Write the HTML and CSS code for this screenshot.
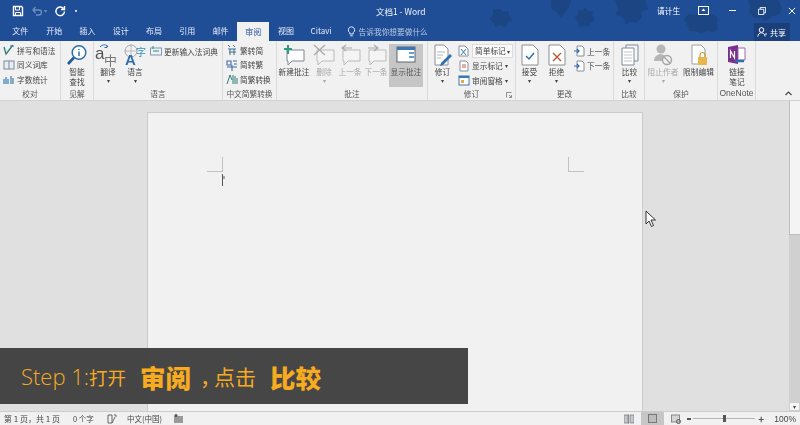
FILE: index.html
```html
<!DOCTYPE html>
<html lang="zh-CN">
  <head>
    <meta charset="UTF-8" />
    <title>文档1 - Word</title>
    <link rel="stylesheet" href="styles.css">
  </head>
  <body>
    <div class="app">
      <header class="titlebar">
        <svg class="stars" width="800" height="41" viewBox="0 0 800 41">
          <g fill="#1c4584" stroke="#1c4584" stroke-width="2" stroke-linejoin="round">
            <path d="M500 10l3 3 5-1 0 4 3 4-4 2-2 4-5-2-4 2-1-4-4-3 3-4 0-5 5 0z"/>
            <path d="M552 0h18l-2 7-3 4-4 5-4-5-5-3z"/>
            <path d="M585 9l3 3 4 0-1 4 3 4-4 2-2 4-3-2-5 2-1-5-3-3 3-3 0-4 4 0z"/>
            <path d="M616 0h28l3 8-7 3 1 6-5 5-5-1-5 2-2-6-7-3 2-6z"/>
            <path d="M689 15l5 1 6-2 5 3 7-2 5 3-1 5 1 6-4 2-6-1-6 2-6-2-5 0-2-6-3-5z"/>
            <path d="M749 0h28l4 8-3 6-6 1-6 5-5-3-6 0-5-6 1-5z"/>
          </g>
        </svg>
        <div class="toprow">
          <div class="qat">
            <svg width="12" height="12" viewBox="0 0 12 12"><path d="M1.500 1.500h8l1 1v8h-9z" fill="none" stroke="#fff" stroke-width="1.400"/><path d="M3.500 2v3h4V2M3.500 10V7.500h5V10" fill="none" stroke="#fff"/></svg>
            <svg width="12" height="12" viewBox="0 0 12 12"><path d="M2 5h6a2.500 2.500 0 0 1 0 5H5M4.500 2L2 5l2.500 3" fill="none" stroke="#6f8fc0" stroke-width="1.300"/></svg>
            <span class="qat-drop">▾</span>
            <svg width="12" height="12" viewBox="0 0 12 12"><path d="M9.500 3.500a4.300 4.300 0 1 0 1 3M10.500 1v3.500H7" fill="none" stroke="#fff" stroke-width="1.400"/></svg>
            <span class="qat-more">▪</span>
          </div>
          <div class="doc-title">文档1 - Word</div>
          <div class="window-controls">
            <span class="account">请计生</span>
            <svg width="11" height="9" viewBox="0 0 11 9"><rect x=".5" y=".5" width="10" height="8" fill="none" stroke="#fff"/><path d="M3.500 5L5.500 2.500 7.500 5z" fill="#fff"/></svg>
            <span class="minimize"></span>
            <svg width="8" height="8" viewBox="0 0 9 9"><path d="M.5 2.500h6v6h-6zM2.500 2.500v-2h6v6h-2" fill="none" stroke="#fff"/></svg>
            <svg width="8" height="8" viewBox="0 0 9 9"><path d="M1 1l7 7M8 1l-7 7" stroke="#fff" stroke-width="1.100"/></svg>
          </div>
        </div>
        <nav class="tabs">
          <span class="tab tab-file">文件</span>
          <span class="tab">开始</span>
          <span class="tab">插入</span>
          <span class="tab">设计</span>
          <span class="tab">布局</span>
          <span class="tab">引用</span>
          <span class="tab">邮件</span>
          <span class="tab active">审阅</span>
          <span class="tab">视图</span>
          <span class="tab tab-citavi">Citavi</span>
          <span class="tell-me">
            <svg width="9" height="11" viewBox="0 0 9 11"><path d="M4.500 .8a3.200 3.200 0 0 0-1.700 5.900V8h3.400V6.700A3.200 3.200 0 0 0 4.500 .8zM3.200 9.800h2.600" fill="none" stroke="#dfe8f5"/></svg>
            告诉我你想要做什么
          </span>
          <span class="share">
            <svg width="10" height="10" viewBox="0 0 10 10"><circle cx="4.500" cy="3" r="2.300" fill="none" stroke="#fff"/><path d="M.8 9.500c.5-5 6.500-5 7.400 0M8 7h2" fill="none" stroke="#fff"/></svg>
            共享
          </span>
        </nav>
      </header>

      <section class="ribbon">
        <div class="group w-60">
          <div class="group-body col">
            <div class="small"><svg width="12" height="12" viewBox="0 0 12 12"><path d="M1 3l2 7 7-9" fill="none" stroke="#2f7d7d" stroke-width="1.300"/><path d="M7 2h4" stroke="#4a78b0"/></svg>拼写和语法</div>
            <div class="small"><svg width="12" height="12" viewBox="0 0 12 12"><rect x="1" y="2" width="10" height="8" fill="#e8eef5" stroke="#7c8a99"/><path d="M6 2v8" stroke="#7c8a99"/></svg>同义词库</div>
            <div class="small"><svg width="12" height="12" viewBox="0 0 12 12"><path d="M1 11V6M3 11V4M5 11V6M8 11V3M10 11V5" stroke="#3c7cb5" stroke-width="1.200"/></svg>字数统计</div>
          </div>
          <div class="group-label">校对</div>
        </div>
        <div class="group w-33">
          <div class="group-body">
            <div class="big w-32">
              <svg class="big-icon" width="22" height="22" viewBox="0 0 22 22"><circle cx="13" cy="8.500" r="6.800" fill="#fff" stroke="#2f6fb0" stroke-width="1.500"/><path d="M13 5v1M13 7.500V12" stroke="#2f6fb0" stroke-width="1.500"/><path d="M8 13.500L2 20" stroke="#1e5c9a" stroke-width="2.600"/></svg>
              <span>智能<br>查找</span>
            </div>
          </div>
          <div class="group-label">见解</div>
        </div>
        <div class="group w-129">
          <div class="group-body">
            <div class="big w-28">
              <svg class="big-icon" width="26" height="22" viewBox="0 0 26 22"><path d="M5 3c3-3 6-3 8 0M12 1v2.500h-2.500" fill="none" stroke="#2f6fb0"/><text x="0" y="15" class="glyph-a">a</text><text x="9" y="21" class="glyph-zh">中</text></svg>
              <span>翻译</span>
              <i class="drop">▾</i>
            </div>
            <div class="big w-26">
              <svg class="big-icon" width="26" height="22" viewBox="0 0 26 22"><circle cx="9" cy="7" r="6" fill="none" stroke="#a0a6ad"/><path d="M3 7h12M9 1v12" stroke="#a0a6ad" stroke-width=".7"/><text x="3" y="21" class="glyph-big">A</text><text x="14" y="12" class="glyph-zi">字</text></svg>
              <span>语言</span>
              <i class="drop">▾</i>
            </div>
            <div class="small ime"><svg width="12" height="10" viewBox="0 0 12 10"><rect x=".5" y="2" width="11" height="7" fill="#eef2f6" stroke="#7d98b3"/><path d="M3 0v3M3 5h6" stroke="#2f8a80"/></svg>更新输入法词典</div>
          </div>
          <div class="group-label">语言</div>
        </div>
        <div class="group w-54">
          <div class="group-body col">
            <div class="small"><svg width="12" height="12" viewBox="0 0 12 12"><path d="M2 1l2 2M7 1l2 2M2 5h8M3 8h7M4 5v6M8 5v6" stroke="#3d6f8f"/></svg>繁转简</div>
            <div class="small"><svg width="12" height="12" viewBox="0 0 12 12"><path d="M1 2h4v4H1zM7 2h4M8 5h3M1 8h10M6 6v6" fill="none" stroke="#3c69a8" stroke-width="1.100"/></svg>简转繁</div>
            <div class="small"><svg width="12" height="12" viewBox="0 0 12 12"><path d="M1 11l3-9 2 5M7 2v9M9 3v8M11 5v6" fill="none" stroke="#2f7d7d"/></svg>简繁转换</div>
          </div>
          <div class="group-label">中文简繁转换</div>
        </div>
        <div class="group w-151">
          <div class="group-body">
            <div class="big w-34">
              <svg class="big-icon" width="24" height="22" viewBox="0 0 24 22"><path d="M5 6h17v11H10l-4 4v-4H5z" fill="#fff" stroke="#7d8790"/><path d="M6 1v9M2 5h8" stroke="#2e9c7c" stroke-width="2"/></svg>
              <span>新建批注</span>
            </div>
            <div class="big w-26 off">
              <svg class="big-icon" width="24" height="22" viewBox="0 0 24 22"><path d="M5 6h17v11H10l-4 4v-4H5z" fill="#f4f4f4" stroke="#bbb"/><path d="M2 1l11 10M13 1L2 11" stroke="#aaa" stroke-width="1.300"/></svg>
              <span>删除</span>
              <i class="drop">▾</i>
            </div>
            <div class="big w-26 off">
              <svg class="big-icon" width="24" height="22" viewBox="0 0 24 22"><path d="M5 6h17v11H10l-4 4v-4H5z" fill="#f4f4f4" stroke="#bbb"/><path d="M14 4H5M8 1L4 4l4 3" fill="none" stroke="#aaa" stroke-width="1.200"/></svg>
              <span>上一条</span>
            </div>
            <div class="big w-26 off">
              <svg class="big-icon" width="24" height="22" viewBox="0 0 24 22"><path d="M5 6h17v11H10l-4 4v-4H5z" fill="#f4f4f4" stroke="#bbb"/><path d="M4 4h9M10 1l4 3-4 3" fill="none" stroke="#aaa" stroke-width="1.200"/></svg>
              <span>下一条</span>
            </div>
            <div class="big w-34 pressed">
              <svg class="big-icon" width="20" height="20" viewBox="0 0 20 20"><rect x="1" y="2" width="18" height="15" fill="#fff" stroke="#5a6770"/><path d="M1 2h18v3H1z" fill="#3976b5"/><path d="M13 7h5v2h-5zM13 11h5v2h-5z" fill="#5fa0d6"/></svg>
              <span>显示批注</span>
            </div>
          </div>
          <div class="group-label">批注</div>
        </div>
        <div class="group w-88">
          <div class="group-body">
            <div class="big w-29">
              <svg class="big-icon" width="22" height="22" viewBox="0 0 22 22"><path d="M3 1h9l4 4v16H3z" fill="#fff" stroke="#8a8f95"/><path d="M5 8h8M5 11h6M5 14h4" stroke="#b3b7bb"/><path d="M9 19l9-9 2 2-9 9-3 1z" fill="#2f6fb0"/></svg>
              <span>修订</span>
              <i class="drop">▾</i>
            </div>
            <div class="col track">
              <div class="small"><svg width="12" height="12" viewBox="0 0 12 12"><path d="M1 1h6l3 3v7H1z" fill="#fff" stroke="#8a8f95"/><path d="M3 4l5 6M8 4l-5 6" stroke="#2f6fb0"/></svg><span class="select">简单标记 <b>▾</b></span></div>
              <div class="small"><svg width="12" height="12" viewBox="0 0 12 12"><path d="M2 1h6l2 2v8H2z" fill="#fff" stroke="#8a8f95"/><path d="M4 5h4M4 7h4" stroke="#c0604d"/></svg>显示标记 <b class="tiny">▾</b></div>
              <div class="small"><svg width="12" height="12" viewBox="0 0 12 12"><rect x="1" y="2" width="10" height="9" fill="#fff" stroke="#3976b5"/><path d="M1 2h10v2H1z" fill="#3976b5"/><path d="M3 6h3v3H3z" fill="#f0a040"/></svg>审阅窗格 <b class="tiny">▾</b></div>
            </div>
          </div>
          <div class="group-label">修订<svg class="launcher" width="6" height="6" viewBox="0 0 6 6"><path d="M.5 5.500v-5h5M3 3l2.500 2.500M5.500 3v2.500H3" fill="none" stroke="#777" stroke-width=".8"/></svg></div>
        </div>
        <div class="group w-98">
          <div class="group-body">
            <div class="big w-27">
              <svg class="big-icon" width="20" height="22" viewBox="0 0 20 22"><path d="M2 1h11l5 5v15H2z" fill="#fff" stroke="#8a8f95"/><path d="M6 12l3 3 5-6" fill="none" stroke="#2f6fb0" stroke-width="1.500"/></svg>
              <span>接受</span>
              <i class="drop">▾</i>
            </div>
            <div class="big w-27">
              <svg class="big-icon" width="20" height="22" viewBox="0 0 20 22"><path d="M2 1h11l5 5v15H2z" fill="#fff" stroke="#8a8f95"/><path d="M6 9l8 8M14 9l-8 8" stroke="#b8562f" stroke-width="1.400"/></svg>
              <span>拒绝</span>
              <i class="drop">▾</i>
            </div>
            <div class="col">
              <div class="small"><svg width="12" height="12" viewBox="0 0 12 12"><path d="M4 1h5l2 2v8H4z" fill="#fff" stroke="#8a8f95"/><path d="M1 6h5M4 4l2 2-2 2" fill="none" stroke="#2f6fb0" stroke-width="1.200"/></svg>上一条</div>
              <div class="small"><svg width="12" height="12" viewBox="0 0 12 12"><path d="M4 1h5l2 2v8H4z" fill="#fff" stroke="#8a8f95"/><path d="M1 6h5M4 4l2 2-2 2" fill="none" stroke="#2f6fb0" stroke-width="1.200"/></svg>下一条</div>
            </div>
          </div>
          <div class="group-label">更改</div>
        </div>
        <div class="group w-31">
          <div class="group-body">
            <div class="big w-31">
              <svg class="big-icon" width="20" height="22" viewBox="0 0 20 22"><path d="M6 1h12v16H6z" fill="#f4f6f8" stroke="#7d8b99"/><path d="M2 4h12v17H2z" fill="#fff" stroke="#7d8b99"/><path d="M4 8h8M4 11h8M4 14h8M4 17h8" stroke="#c2c8ce"/></svg>
              <span>比较</span>
              <i class="drop">▾</i>
            </div>
          </div>
          <div class="group-label">比较</div>
        </div>
        <div class="group w-73">
          <div class="group-body">
            <div class="big w-36 off">
              <svg class="big-icon" width="22" height="22" viewBox="0 0 22 22"><circle cx="9" cy="5" r="4.500" fill="#b6b6b6"/><path d="M2 17c0-9 13-9 14 0z" fill="#b6b6b6"/><circle cx="15" cy="16" r="4.500" fill="#f1f1f1" stroke="#a5a5a5" stroke-width="1.400"/><path d="M12 13l6 6" stroke="#a5a5a5" stroke-width="1.400"/></svg>
              <span>阻止作者</span>
              <i class="drop">▾</i>
            </div>
            <div class="big w-35">
              <svg class="big-icon" width="22" height="22" viewBox="0 0 22 22"><path d="M4 1h9l4 4v15H4z" fill="#fff" stroke="#9a9fa5"/><rect x="10" y="13" width="9" height="8" fill="#e8b64a"/><path d="M12 13v-2a2.500 2.500 0 0 1 5 0v2" fill="none" stroke="#c99a35" stroke-width="1.200"/></svg>
              <span>限制编辑</span>
            </div>
          </div>
          <div class="group-label">保护</div>
        </div>
        <div class="group w-38">
          <div class="group-body">
            <div class="big w-38">
              <svg class="big-icon" width="20" height="20" viewBox="0 0 20 20"><path d="M1 2l10-2v19L1 17z" fill="#7a2f8f"/><path d="M11 3h7v12h-7z" fill="#fff" stroke="#9a6aac"/><path d="M3.500 13V6l4 7V6" fill="none" stroke="#fff" stroke-width="1.200"/><path d="M8 16h5M12 16h5" stroke="#2f6fb0" stroke-width="2.400"/></svg>
              <span>链接<br>笔记</span>
            </div>
          </div>
          <div class="group-label latin-label">OneNote</div>
        </div>
        <div class="ribbon-end"><svg width="7" height="5" viewBox="0 0 7 5"><path d="M.5 4l3-3 3 3" fill="none" stroke="#444" stroke-width="1.100"/></svg></div>
      </section>

      <main class="workspace">
        <div class="page">
          <div class="margins">
            <div class="left-margin">
              <span class="mark mark-left"></span>
              <span class="caret"></span>
            </div>
            <span class="mark mark-right"></span>
          </div>
        </div>
        <div class="scrollbar">
          <span class="thumb"></span>
          <span class="track-fill"></span>
          <span class="scroll-down">▾</span>
        </div>
      </main>

      <footer class="statusbar">
        <span class="st st-page">第 1 页，共 1 页</span>
        <span class="st st-words">0 个字</span>
        <svg class="st-proof" width="10" height="10" viewBox="0 0 10 10"><path d="M1 1h4v8H1zM5 9l3-6" fill="none" stroke="#666"/><path d="M7 1h2v2" fill="none" stroke="#666"/></svg>
        <span class="st st-lang">中文(中国)</span>
        <svg class="st-macro" width="9" height="9" viewBox="0 0 9 9"><rect x="0" y="2" width="9" height="7" fill="#999"/><circle cx="2" cy="1.500" r="1.500" fill="#555"/></svg>
        <span class="status-right">
          <svg class="view" width="10" height="10" viewBox="0 0 10 10"><path d="M0 1h4v8H0zM6 1h4v8H6zM4.500 0v10" fill="#c5c9cd" stroke="#777" stroke-width=".7"/></svg>
          <span class="view-on"><svg width="9" height="9" viewBox="0 0 9 9"><rect x=".5" y=".5" width="8" height="8" fill="#bcbcbc" stroke="#777"/></svg></span>
          <svg class="view" width="10" height="10" viewBox="0 0 10 10"><rect x=".5" y="1" width="8" height="7" fill="#d5d5d5" stroke="#888"/><circle cx="7.500" cy="7.500" r="2" fill="none" stroke="#555"/></svg>
          <span class="zoom-minus"></span>
          <span class="zoom-track"><i class="zoom-thumb"></i></span>
          <span class="zoom-plus">+</span>
          <span class="st zoom-value">100%</span>
        </span>
      </footer>
    </div>

    <svg class="mouse" width="12" height="18" viewBox="0 0 12 18"><path d="M1 1v13l3-3 2.500 5.500 2-1L6 10h4.500z" fill="#fff" stroke="#333"/></svg>

    <div class="banner">
      <span class="step"><span class="latin">Step 1:</span>打开</span>
      <strong>审阅</strong>
      <span class="comma"><span class="comma-mark">，</span>点击</span>
      <strong>比较</strong>
    </div>
  </body>
</html>
```

FILE: styles.css
```css
* {
  box-sizing: border-box;
}
body {
  margin: 0;
  font-family: "Noto Sans CJK SC", "Liberation Sans", sans-serif;
  font-size: 8px;
  color: #444;
  overflow: hidden;
}
.app {
  display: flex;
  flex-direction: column;
  width: 800px;
  height: 425px;
  overflow: hidden;
  background: #e0e0e0;
  filter: blur(0.35px);
}

/* title bar */
.titlebar {
  position: relative;
  flex: none;
  height: 41px;
  background: #1f4e97;
  color: #fff;
}
.stars {
  position: absolute;
  left: 0;
  top: 0;
}
.toprow {
  position: relative;
  display: flex;
  align-items: center;
  height: 21px;
}
.qat {
  display: flex;
  align-items: center;
  gap: 7px;
  width: 370px;
  padding-left: 12px;
}
.qat-drop {
  margin-left: -6px;
  font-size: 6px;
  color: #6f8fc0;
}
.qat-more {
  font-size: 6px;
}
.doc-title {
  width: 90px;
  padding-left: 6px;
  font-size: 8.5px;
  color: #f2f5fa;
}
.window-controls {
  display: flex;
  align-items: center;
  margin-left: 197px;
}
.account {
  width: 29px;
  margin-right: 4px;
  font-size: 7.7px;
  white-space: nowrap;
}
.window-controls svg:nth-of-type(1) {
  margin-left: 8px;
}
.minimize {
  width: 7px;
  height: 1px;
  margin-left: 20px;
  background: #fff;
}
.window-controls svg:nth-of-type(2) {
  margin-left: 22px;
}
.window-controls svg:nth-of-type(3) {
  margin-left: 22px;
}
.tabs {
  position: relative;
  display: flex;
  height: 20px;
  padding-left: 3px;
}
.tab {
  display: flex;
  align-items: center;
  justify-content: center;
  width: 33.3px;
  padding-bottom: 1px;
  font-size: 8px;
  color: #e6ecf6;
}
.tab-file {
  width: 34.5px;
}
.tab.active {
  width: 32px;
  margin-top: 1px;
  background: #f1f1f1;
  color: #2b579a;
}
.tab-citavi {
  width: 37px;
}
.tell-me {
  display: flex;
  align-items: center;
  gap: 3px;
  margin-left: 7px;
  font-size: 7.7px;
  color: #b9c9e2;
}
.share {
  position: absolute;
  right: 10px;
  top: 2px;
  display: flex;
  align-items: center;
  gap: 3px;
  width: 36px;
  height: 18px;
  padding: 0 3px;
  background: #1a3f7b;
  white-space: nowrap;
  font-size: 8px;
}

/* ribbon */
.ribbon {
  display: flex;
  height: 60px;
  flex: none;
  background: #f1f1f1;
  border-bottom: 1px solid #d2d2d2;
}
.group {
  display: flex;
  flex-direction: column;
  height: 59px;
  border-right: 1px solid #dadada;
}
.group-body {
  display: flex;
  flex: 1;
  padding-top: 3px;
}
.group-label {
  position: relative;
  height: 12px;
  text-align: center;
  font-size: 7.7px;
  line-height: 11px;
  color: #555;
  white-space: nowrap;
}
.latin-label {
  font-family: "Liberation Sans", sans-serif;
  font-size: 8.5px;
}
.launcher {
  position: absolute;
  right: 3px;
  bottom: 2px;
}
.col {
  display: flex;
  flex-direction: column;
}
.group-body.col {
  padding-top: 2px;
}
.small {
  display: flex;
  align-items: center;
  gap: 2px;
  height: 14.5px;
  padding-left: 3px;
  white-space: nowrap;
  font-size: 7.7px;
}
.big {
  display: flex;
  flex-direction: column;
  align-items: center;
  flex: none;
  height: 44px;
  line-height: 9.5px;
  text-align: center;
  white-space: nowrap;
  font-size: 7.7px;
}
.big-icon {
  flex: none;
  height: 22px;
  margin-bottom: 1px;
  overflow: visible;
}
.big .drop {
  font-style: normal;
  font-size: 6px;
  line-height: 8px;
}
.big.off {
  color: #a8a8a8;
}
.big.pressed {
  background: #c6c6c6;
  height: 43px;
  color: #555;
}
.w-60 { width: 61px; }
.w-33 { width: 33px; }
.w-129 { width: 129px; }
.w-54 { width: 54px; }
.w-151 { width: 151px; }
.w-88 { width: 88px; }
.w-98 { width: 98px; }
.w-31 { width: 31px; }
.w-73 { width: 73px; }
.w-38 { width: 38px; }
.w-32 { width: 32px; }
.w-34 { width: 34px; }
.w-28 { width: 28px; }
.w-29 { width: 29px; }
.w-26 { width: 26px; }
.w-27 { width: 27px; }
.w-36 { width: 36px; }
.w-35 { width: 35px; }
.ime {
  height: 12px;
  padding-left: 2px;
  margin-top: 1px;
}
.track {
  margin-left: -2px;
}
.select {
  padding: 0 2px;
  background: #fafafa;
  border: 1px solid #dcdcdc;
  height: 14px;
  line-height: 12px;
}
.small b {
  font-size: 6px;
  font-weight: 400;
}
.glyph-a {
  font-family: "Liberation Sans", sans-serif;
  font-size: 17px;
  fill: #555;
}
.glyph-zh {
  font-size: 13px;
  fill: #777;
}
.glyph-big {
  font-family: "Liberation Sans", sans-serif;
  font-size: 15px;
  font-weight: 700;
  fill: #2f6fb0;
}
.glyph-zi {
  font-size: 10px;
  fill: #2f8fc0;
}
.ribbon-end {
  display: flex;
  flex: 1;
  align-items: flex-end;
  justify-content: flex-end;
  padding: 0 8px 4px 0;
}

/* document area */
.workspace {
  display: flex;
  flex: 1;
  min-height: 0;
  padding-top: 11px;
  background: #e0e0e0;
}
.page {
  width: 496px;
  margin-left: 147px;
  border: 1px solid #cbcbcb;
  border-bottom: none;
  background: #f1f1f1;
}
.margins {
  display: flex;
  justify-content: space-between;
  padding: 44px 58px 0 59px;
}
.left-margin {
  display: flex;
  flex-direction: column;
  align-items: flex-end;
}
.mark {
  display: block;
  width: 16px;
  height: 15px;
  border-color: #c2c2c2;
  border-style: solid;
  border-width: 0;
}
.mark-left {
  border-right-width: 1px;
  border-bottom-width: 1px;
}
.mark-right {
  border-left-width: 1px;
  border-bottom-width: 1px;
}
.caret {
  position: relative;
  width: 1px;
  height: 12px;
  margin-top: 2px;
  background: #555;
}
.caret::after {
  content: "";
  position: absolute;
  left: 1px;
  top: 2px;
  width: 2px;
  height: 3px;
  background: #aaa;
}
.scrollbar {
  display: flex;
  flex-direction: column;
  width: 11px;
  margin-left: auto;
  margin-top: -11px;
}
.thumb {
  height: 134px;
  background: #f4f4f4;
  border-left: 1px solid #bdbdbd;
  border-bottom: 1px solid #bdbdbd;
}
.track-fill {
  flex: 1;
  background: #d0d0d0;
}
.scroll-down {
  height: 9px;
  background: #f6f6f6;
  border: 1px solid #cfcfcf;
  text-align: center;
  font-size: 6px;
  line-height: 7px;
  color: #444;
}

/* status bar */
.statusbar {
  display: flex;
  align-items: center;
  flex: none;
  height: 14px;
  padding-left: 4px;
  background: #f1f1f1;
  border-top: 1px solid #cdcdcd;
}
.st {
  font-size: 7.5px;
  color: #444;
  white-space: nowrap;
}
.st-page {
  width: 69px;
  font-size: 8px;
}
.st-words {
  width: 34px;
}
.st-proof {
  margin-right: 10px;
}
.st-lang {
  width: 47px;
}
.status-right {
  display: flex;
  align-items: center;
  margin-left: auto;
  height: 13px;
}
.view-on {
  display: flex;
  align-items: center;
  justify-content: center;
  width: 23px;
  height: 13px;
  margin: 0 7px;
  background: #c6c6c6;
}
.zoom-minus {
  width: 4px;
  height: 2px;
  margin-left: 6px;
  background: #555;
}
.zoom-track {
  display: flex;
  justify-content: center;
  align-items: center;
  width: 62px;
  height: 1px;
  margin: 0 3px 0 2px;
  background: #b5b5b5;
}
.zoom-thumb {
  width: 3px;
  height: 7px;
  background: #555;
}
.zoom-plus {
  width: 8px;
  font-size: 10px;
  font-weight: 700;
  line-height: 10px;
  color: #555;
}
.zoom-value {
  margin: 0 4px 0 8px;
  font-family: "Liberation Sans", sans-serif;
  font-size: 8.5px;
}

/* things on top */
.mouse {
  position: absolute;
  left: 645px;
  top: 210px;
}
.banner {
  position: absolute;
  left: 0;
  top: 348px;
  display: flex;
  align-items: center;
  width: 468px;
  height: 56px;
  padding-left: 21px;
  background: rgba(60, 60, 60, 0.95);
  color: #f7ab1f;
  white-space: nowrap;
  font-size: 18.5px;
}
.banner .latin {
  font-family: "Open Sans", sans-serif;
  font-size: 22px;
  font-weight: 300;
}
.banner strong {
  width: 60px;
  font-size: 25.5px;
  font-weight: 900;
}
.banner .step {
  width: 119px;
}
.banner .comma {
  width: 70px;
  font-size: 21px;
}
.banner .comma-mark {
  margin-right: -7px;
}
```
